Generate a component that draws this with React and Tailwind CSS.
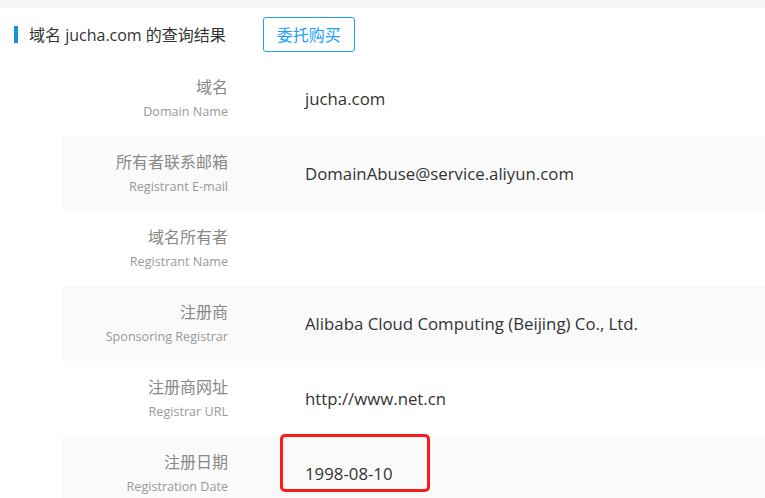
const rows = [
  { cn: "域名", en: "Domain Name", value: "jucha.com" },
  { cn: "所有者联系邮箱", en: "Registrant E-mail", value: "DomainAbuse@service.aliyun.com" },
  { cn: "域名所有者", en: "Registrant Name", value: "" },
  { cn: "注册商", en: "Sponsoring Registrar", value: "Alibaba Cloud Computing (Beijing) Co., Ltd." },
  { cn: "注册商网址", en: "Registrar URL", value: "http://www.net.cn" },
  { cn: "注册日期", en: "Registration Date", value: "1998-08-10", marked: true },
];

const App = () => {
  return (
    <div
      className="w-[765px] h-[498px] overflow-hidden bg-white text-[#333]"
      style={{ fontFamily: '"Open Sans", "Noto Sans CJK SC", sans-serif' }}
    >
      <div className="h-[8px] bg-[#f5f5f5]" />
      <div className="flex items-center h-[53px] pl-[14px]">
        <div className="w-[4px] h-[17px] bg-[#1296db]" />
        <div className="ml-[11px] text-[16px] text-[#333]">域名 jucha.com 的查询结果</div>
        <button className="ml-[37px] w-[92px] h-[35px] border border-[#1e9fff] rounded-[3px] text-[16px] text-[#1e9fff] bg-white">
          委托购买
        </button>
      </div>
      <div className="ml-[62px]">
        {rows.map((r, i) => (
          <div
            key={r.en}
            className={`flex items-center h-[75px] ${i % 2 === 1 ? "bg-[#fafafa]" : "bg-white"}`}
          >
            <div className="w-[166px] flex flex-col items-end">
              <div className="text-[16px] leading-[20px] text-[#888]">{r.cn}</div>
              <div className="mt-[7px] text-[12.6px] leading-[16px] text-[#999]">{r.en}</div>
            </div>
            {r.marked ? (
              <div className="self-start -mt-[2px] ml-[52px] w-[150px] h-[58px] border-[3px] border-[#ff1a1a] rounded-[5px] flex items-end pb-[3px] pl-[22px] text-[16.8px]">
                {r.value}
              </div>
            ) : (
              <div className="ml-[77px] text-[16.8px]">{r.value}</div>
            )}
          </div>
        ))}
      </div>
    </div>
  );
};

export default App;
